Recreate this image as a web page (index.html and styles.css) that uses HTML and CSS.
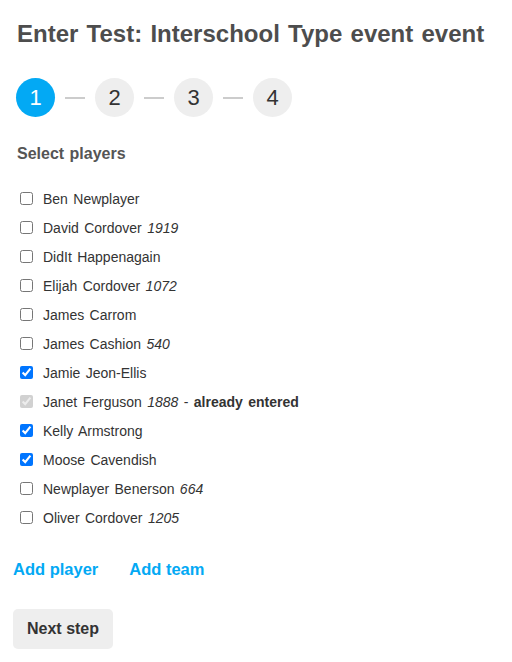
FILE: index.html
```html
<!DOCTYPE html>
<html>
<head>
<meta charset="utf-8">
<link rel="stylesheet" href="styles.css">
</head>
<body>
<div class="page">
  <h1 class="title">Enter Test: Interschool Type event event</h1>
  <div class="steps">
    <span class="step active">1</span>
    <span class="connector"></span>
    <span class="step">2</span>
    <span class="connector"></span>
    <span class="step">3</span>
    <span class="connector"></span>
    <span class="step">4</span>
  </div>
  <h2 class="subtitle">Select players</h2>
  <ul class="players">
    <li><label><input type="checkbox"> <span>Ben Newplayer</span></label></li>
    <li><label><input type="checkbox"> <span>David Cordover <em>1919</em></span></label></li>
    <li><label><input type="checkbox"> <span>DidIt Happenagain</span></label></li>
    <li><label><input type="checkbox"> <span>Elijah Cordover <em>1072</em></span></label></li>
    <li><label><input type="checkbox"> <span>James Carrom</span></label></li>
    <li><label><input type="checkbox"> <span>James Cashion <em>540</em></span></label></li>
    <li><label><input type="checkbox" checked> <span>Jamie Jeon-Ellis</span></label></li>
    <li><label><input type="checkbox" checked disabled> <span>Janet Ferguson <em>1888</em> - <strong>already entered</strong></span></label></li>
    <li><label><input type="checkbox" checked> <span>Kelly Armstrong</span></label></li>
    <li><label><input type="checkbox" checked> <span>Moose Cavendish</span></label></li>
    <li><label><input type="checkbox"> <span>Newplayer Benerson <em>664</em></span></label></li>
    <li><label><input type="checkbox"> <span>Oliver Cordover <em>1205</em></span></label></li>
  </ul>
  <div class="links">
    <a href="#" class="link">Add player</a>
    <a href="#" class="link">Add team</a>
  </div>
  <button class="next">Next step</button>
</div>
</body>
</html>
```
FILE: styles.css
```css
* { box-sizing: border-box; }
body {
  margin: 0;
  font-family: "Liberation Sans", Arial, sans-serif;
  background: #fff;
  color: #333;
}
.page {
  padding: 20px 13px 0 13px;
}
.title {
  margin: 0 0 0 4px;
  font-size: 24px;
  line-height: 28px;
  font-weight: bold;
  color: #4d4d4d;
  word-spacing: 1.6px;
}
.steps {
  display: flex;
  align-items: center;
  gap: 10px;
  margin: 30px 0 0 3px;
}
.step {
  width: 39px;
  height: 39px;
  border-radius: 50%;
  background: #eeeeee;
  color: #333;
  font-size: 22px;
  display: flex;
  align-items: center;
  justify-content: center;
}
.step.active {
  background: #03a9f4;
  color: #fff;
}
.connector {
  width: 20px;
  height: 2px;
  background: #cccccc;
}
.subtitle {
  margin: 27px 0 0 4px;
  font-size: 16px;
  line-height: 20px;
  font-weight: bold;
  color: #555;
  word-spacing: 1px;
}
.players {
  list-style: none;
  margin: 20px 0 0 0;
  padding: 0;
}
.players li {
  height: 29px;
  display: flex;
  align-items: center;
}
.players label {
  display: flex;
  align-items: center;
  font-size: 14px;
  line-height: 16px;
  color: #333;
  word-spacing: 1.5px;
}
.players input {
  margin: 0 10px 0 7px;
  width: 13px;
  height: 13px;
}
.players em { font-style: italic; }
.players strong { font-weight: bold; }
.links {
  display: flex;
  gap: 31px;
  margin-top: 27px;
}
.link {
  color: #03a9f4;
  font-size: 16.5px;
  font-weight: bold;
  text-decoration: none;
  line-height: 20px;
}
.next {
  margin-top: 30px;
  height: 40px;
  padding: 0 14px;
  background: #eeeeee;
  border: none;
  border-radius: 5px;
  font-family: "Liberation Sans", Arial, sans-serif;
  font-size: 16px;
  font-weight: bold;
  color: #333;
}
```
